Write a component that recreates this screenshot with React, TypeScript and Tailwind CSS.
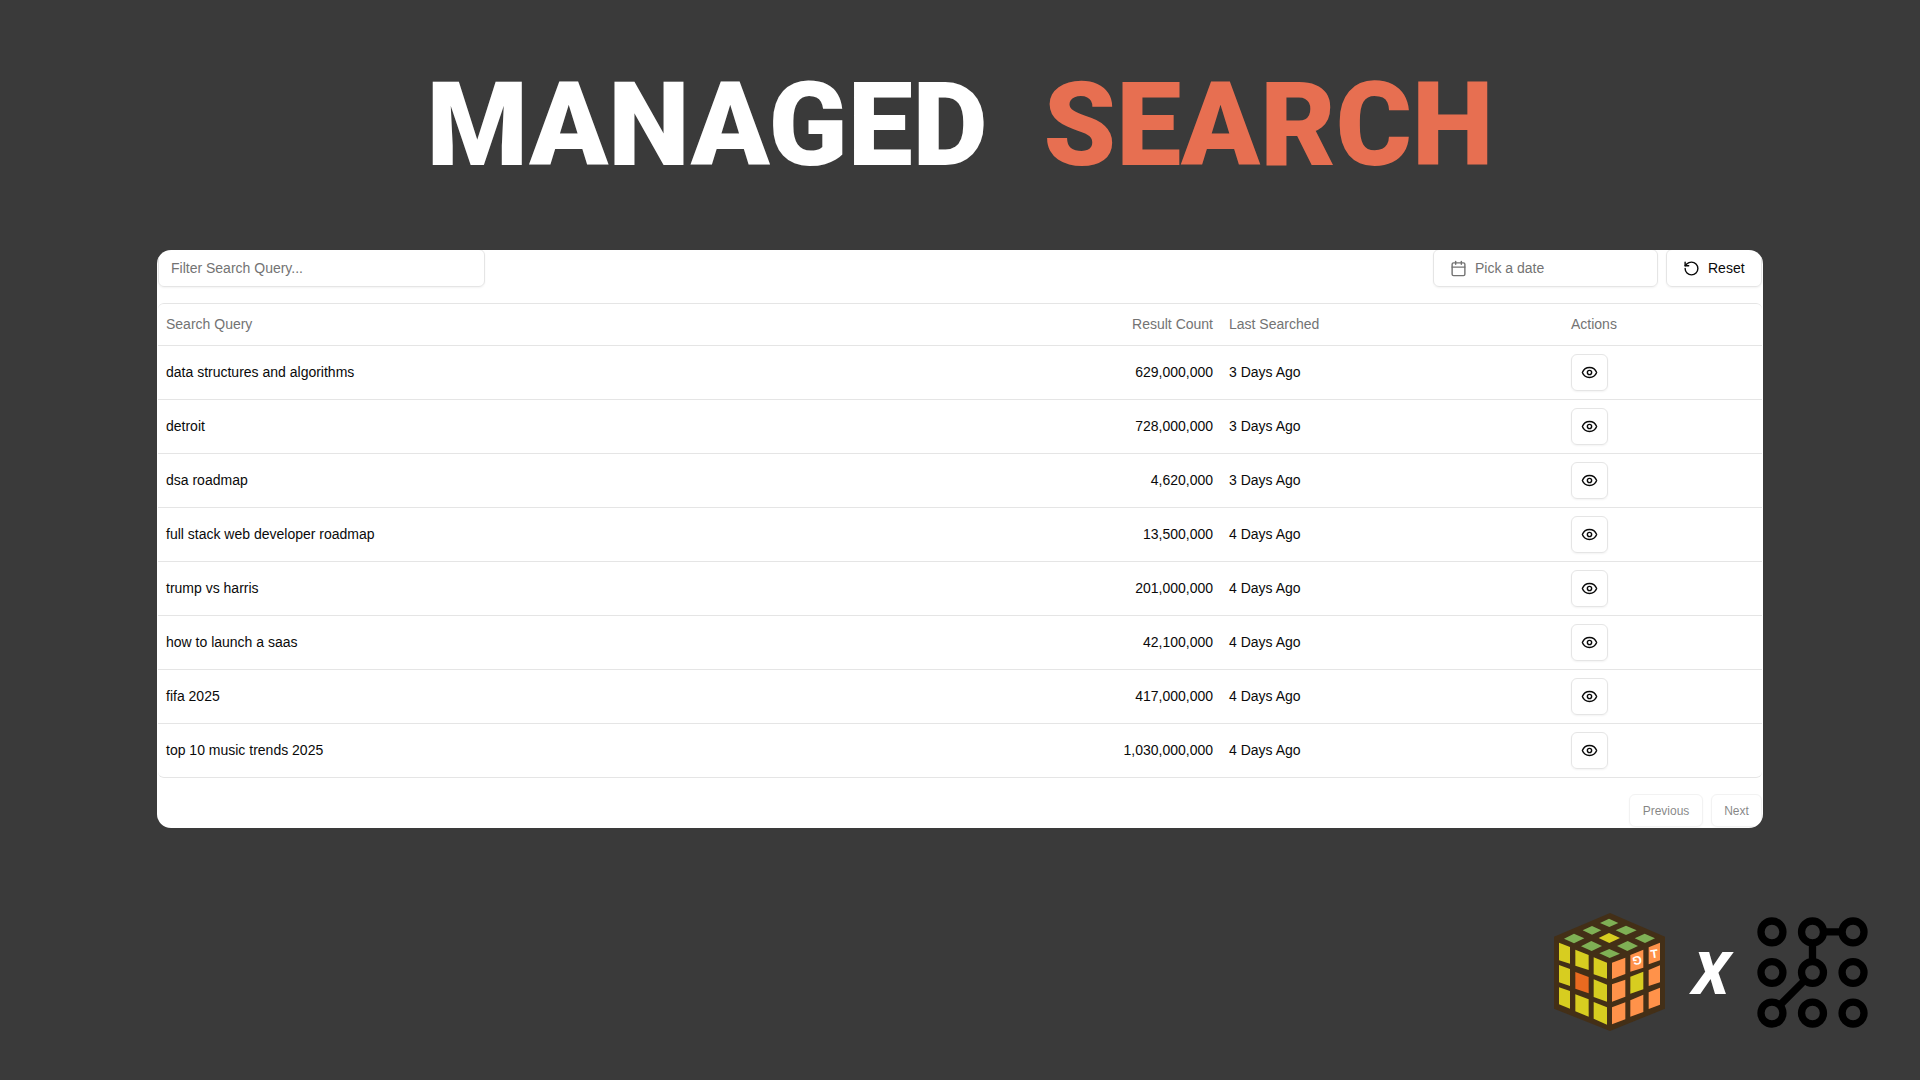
import { Calendar, Eye, RotateCcw } from "lucide-react";

const searches = [
  { query: "data structures and algorithms", count: 629000000, days: 3 },
  { query: "detroit", count: 728000000, days: 3 },
  { query: "dsa roadmap", count: 4620000, days: 3 },
  { query: "full stack web developer roadmap", count: 13500000, days: 4 },
  { query: "trump vs harris", count: 201000000, days: 4 },
  { query: "how to launch a saas", count: 42100000, days: 4 },
  { query: "fifa 2025", count: 417000000, days: 4 },
  { query: "top 10 music trends 2025", count: 1030000000, days: 4 },
];

function CubeLogo() {
  return (
    <svg viewBox="42 39 333 354" className="h-[118px] w-[111px]" aria-hidden>
      <path d="M210 39 375 110V326L210 393 42 326V110Z" fill="#432f17" />
      <g fill="#7fb055">
        <path d="M207 56 235 69 208 81 180 69Z" />
        <path d="M156 78 184 91 156 104 128 91Z" />
        <path d="M258 77 290 91 258 105 227 91Z" />
        <path d="M102 101 133 115 102 130 72 116Z" />
        <path d="M314 101 345 115 315 129 284 115Z" />
        <path d="M154 123 186 138 155 153 123 139Z" />
        <path d="M263 123 294 138 262 153 231 138Z" />
        <path d="M208 147 240 161 209 174 178 160Z" />
      </g>
      <path d="M207 99 240 114 208 129 176 114Z" fill="#d7cd20" />
      <g fill="#d7cd20">
        <path d="M57 128 90 141V191L57 181Z" />
        <path d="M106 149 146 165V210L106 197Z" />
        <path d="M161 172 201 188V236L161 223Z" />
        <path d="M57 195 90 207V258L57 247Z" />
        <path d="M161 238 201 254V305L161 291Z" />
        <path d="M57 262 90 273V326L57 313Z" />
        <path d="M106 283 146 298V350L106 334Z" />
        <path d="M161 306 201 322V374L161 356Z" />
        <path d="M271 230 310 215V268L271 281Z" />
      </g>
      <path d="M106 216 146 231V280L106 266Z" fill="#e96a20" />
      <g fill="#ff924a">
        <path d="M216 188 256 173V222L216 237Z" />
        <path d="M271 165 310 149V203L271 215Z" />
        <path d="M326 142 360 128V181L326 193Z" />
        <path d="M216 253 256 239V290L216 305Z" />
        <path d="M326 210 360 196V247L326 258Z" />
        <path d="M216 322 256 307V358L216 373Z" />
        <path d="M271 301 310 284V336L271 350Z" />
        <path d="M326 277 360 263V314L326 327Z" />
      </g>
      <g
        fill="#fff"
        className="font-['Liberation_Sans'] text-[36px] font-bold"
        textAnchor="middle"
      >
        <text transform="translate(289 169) rotate(170)">G</text>
        <text transform="translate(345 174) rotate(-8)">T</text>
      </g>
    </svg>
  );
}

function NodesLogo() {
  return (
    <svg
      viewBox="260 50 334 334"
      className="size-[111px]"
      fill="none"
      stroke="#000"
      strokeWidth={22}
      aria-hidden
    >
      {[95, 217, 339].map((cy) =>
        [305, 427, 549].map((cx) => (
          <circle key={`${cx}-${cy}`} cx={cx} cy={cy} r={33} />
        )),
      )}
      <path d="M460 95H516M427 128V184M403 241 329 315" />
    </svg>
  );
}

export default function App() {
  return (
    <main className="flex min-h-screen flex-col bg-[#3a3a3a] px-[157px] pt-[60px] font-['Liberation_Sans',Arial,sans-serif] text-sm text-neutral-950">
      <h1 className="flex justify-center gap-x-14 font-[Roboto,sans-serif] text-[116px] leading-[130px] font-black text-white">
        <span>MANAGED</span>
        <span className="text-[#e76f51]">SEARCH</span>
      </h1>

      <section className="mt-[60px] overflow-hidden rounded-[14px] bg-white px-px pb-px">
        <div className="-mt-px flex items-center gap-2">
          <input
            type="text"
            aria-label="Filter Search Query"
            placeholder="Filter Search Query..."
            className="h-[38px] w-[327px] rounded-md border border-neutral-200 px-3 shadow-xs placeholder:text-neutral-500"
          />
          <button
            type="button"
            className="ml-auto flex h-[38px] w-[225px] items-center gap-2 rounded-md border border-neutral-200 px-4 text-neutral-500 shadow-xs"
          >
            <Calendar className="size-[17px]" />
            Pick a date
          </button>
          <button
            type="button"
            className="flex h-[38px] w-24 items-center gap-2 rounded-md border border-neutral-200 px-4 shadow-xs"
          >
            <RotateCcw className="size-[17px]" />
            Reset
          </button>
        </div>

        <div className="mt-4 rounded-md border-y border-neutral-200">
          <table className="w-full table-fixed border-collapse">
            <colgroup>
              <col />
              <col className="w-[180px]" />
              <col className="w-[342px]" />
              <col className="w-[199px]" />
            </colgroup>
            <thead>
              <tr className="h-[41px] border-b border-neutral-200 text-left text-neutral-500">
                <th className="px-2 font-normal">Search Query</th>
                <th className="px-2 text-right font-normal">Result Count</th>
                <th className="px-2 font-normal">Last Searched</th>
                <th className="px-2 font-normal">Actions</th>
              </tr>
            </thead>
            <tbody>
              {searches.map(({ query, count, days }) => (
                <tr
                  key={query}
                  className="h-[54px] border-b border-neutral-200 last:border-0"
                >
                  <td className="px-2">{query}</td>
                  <td className="px-2 text-right">
                    {count.toLocaleString("en-US")}
                  </td>
                  <td className="px-2">{days} Days Ago</td>
                  <td className="px-2">
                    <button
                      type="button"
                      aria-label={`View ${query}`}
                      className="flex size-[37px] items-center justify-center rounded-md border border-neutral-200 shadow-xs"
                    >
                      <Eye className="size-[17px]" />
                    </button>
                  </td>
                </tr>
              ))}
            </tbody>
          </table>
        </div>

        <div className="mt-4 flex justify-end gap-2 text-xs">
          <button
            type="button"
            disabled
            className="h-[33px] w-[74px] rounded-md border border-neutral-200 opacity-50 shadow-xs"
          >
            Previous
          </button>
          <button
            type="button"
            disabled
            className="h-[33px] w-[51px] rounded-md border border-neutral-200 opacity-50 shadow-xs"
          >
            Next
          </button>
        </div>
      </section>

      <footer className="-mr-[105px] mt-auto flex items-center justify-end gap-6 pb-[49px]">
        <CubeLogo />
        <span className="w-11 text-center font-['Noto_Sans',sans-serif] text-[58px] leading-[60px] font-extrabold text-white italic">
          X
        </span>
        <NodesLogo />
      </footer>
    </main>
  );
}
